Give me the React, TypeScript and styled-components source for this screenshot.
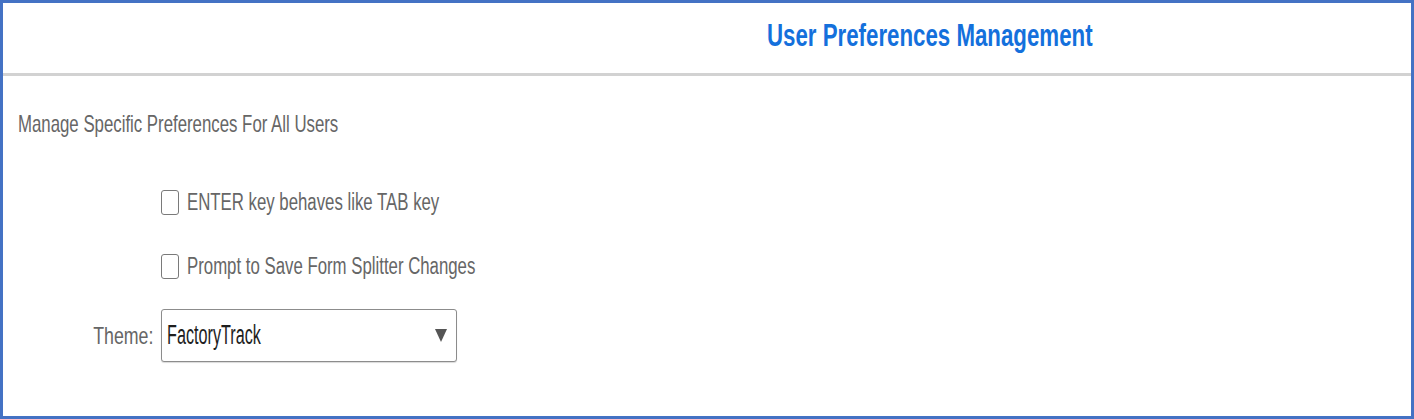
import React from "react";
import styled, { createGlobalStyle } from "styled-components";

const GlobalStyle = createGlobalStyle`
  html, body {
    margin: 0;
    padding: 0;
    background: #ffffff;
  }
  body {
    font-family: "Liberation Sans", Arial, sans-serif;
  }
`;

const Frame = styled.div`
  box-sizing: border-box;
  width: 1414px;
  height: 419px;
  border: 3px solid #4472c4;
  background: #ffffff;
  display: flex;
  flex-direction: column;
  overflow: hidden;
`;

const Header = styled.header`
  box-sizing: border-box;
  height: 73px;
  padding: 16px 0 0 764px;
  border-bottom: 3px solid #d2d2d2;
  display: flex;
  align-items: flex-start;
`;

/* Condensed text: the face is narrowed horizontally around its origin */
const Narrow = styled.span<{ $scale: number; $origin?: "left" | "right" }>`
  display: inline-block;
  white-space: nowrap;
  transform: scaleX(${(p) => p.$scale});
  transform-origin: ${(p) => p.$origin ?? "left"} center;
`;

const Title = styled.h1`
  margin: 0;
  font-size: 32px;
  line-height: 1;
  font-weight: 700;
  color: #1470dc;
  letter-spacing: 0;
`;

const Body = styled.section`
  flex: 1;
  padding: 36px 0 0 15px;
  display: flex;
  flex-direction: column;
`;

const Intro = styled.p`
  margin: 0;
  font-size: 24px;
  line-height: 1;
  color: #666666;
`;

const Form = styled.div`
  margin-top: 53px;
  display: grid;
  grid-template-columns: 143px 1fr;
  align-items: center;
`;

const Options = styled.div`
  grid-column: 2;
  display: flex;
  flex-direction: column;
  gap: 38px;
`;

const OptionRow = styled.label`
  display: flex;
  align-items: center;
  height: 26px;
  gap: 8px;
  cursor: pointer;
`;

const Box = styled.span`
  box-sizing: border-box;
  width: 18px;
  height: 25px;
  border: 1.5px solid #7a7a7a;
  border-radius: 3px;
  background: #ffffff;
  flex-shrink: 0;
`;

const OptionText = styled.span`
  font-size: 23px;
  line-height: 1;
  color: #666666;
`;

const FieldLabel = styled.span`
  grid-column: 1;
  margin-top: 30px;
  padding-right: 8px;
  text-align: right;
  font-size: 24px;
  line-height: 1;
  color: #666666;
`;

const Select = styled.div`
  grid-column: 2;
  margin-top: 30px;
  box-sizing: border-box;
  width: 296px;
  height: 53px;
  border: 1px solid #8c8c8c;
  border-radius: 3px;
  box-shadow: 0 1px 1px rgba(0, 0, 0, 0.15);
  display: flex;
  align-items: center;
  justify-content: space-between;
  padding: 0 9px 0 5px;
  background: #ffffff;
`;

const SelectValue = styled.span`
  font-size: 27px;
  line-height: 1;
  color: #1e1e1e;
`;

const Caret = styled.svg`
  width: 12px;
  height: 13px;
  flex-shrink: 0;
`;

const options = ["ENTER key behaves like TAB key", "Prompt to Save Form Splitter Changes"];

export default function App() {
  return (
    <>
      <GlobalStyle />
      <Frame>
        <Header>
          <Title>
            <Narrow $scale={0.696}>User Preferences Management</Narrow>
          </Title>
        </Header>
        <Body>
          <Intro>
            <Narrow $scale={0.7}>Manage Specific Preferences For All Users</Narrow>
          </Intro>
          <Form>
            <Options>
              {options.map((text) => (
                <OptionRow key={text}>
                  <Box />
                  <OptionText>
                    <Narrow $scale={0.73}>{text}</Narrow>
                  </OptionText>
                </OptionRow>
              ))}
            </Options>
            <FieldLabel>
              <Narrow $scale={0.74} $origin="right">
                Theme:
              </Narrow>
            </FieldLabel>
            <Select>
              <SelectValue>
                <Narrow $scale={0.6}>FactoryTrack</Narrow>
              </SelectValue>
              <Caret viewBox="0 0 12 13">
                <path d="M0 0 H12 L6 13 Z" fill="#555555" />
              </Caret>
            </Select>
          </Form>
        </Body>
      </Frame>
    </>
  );
}
